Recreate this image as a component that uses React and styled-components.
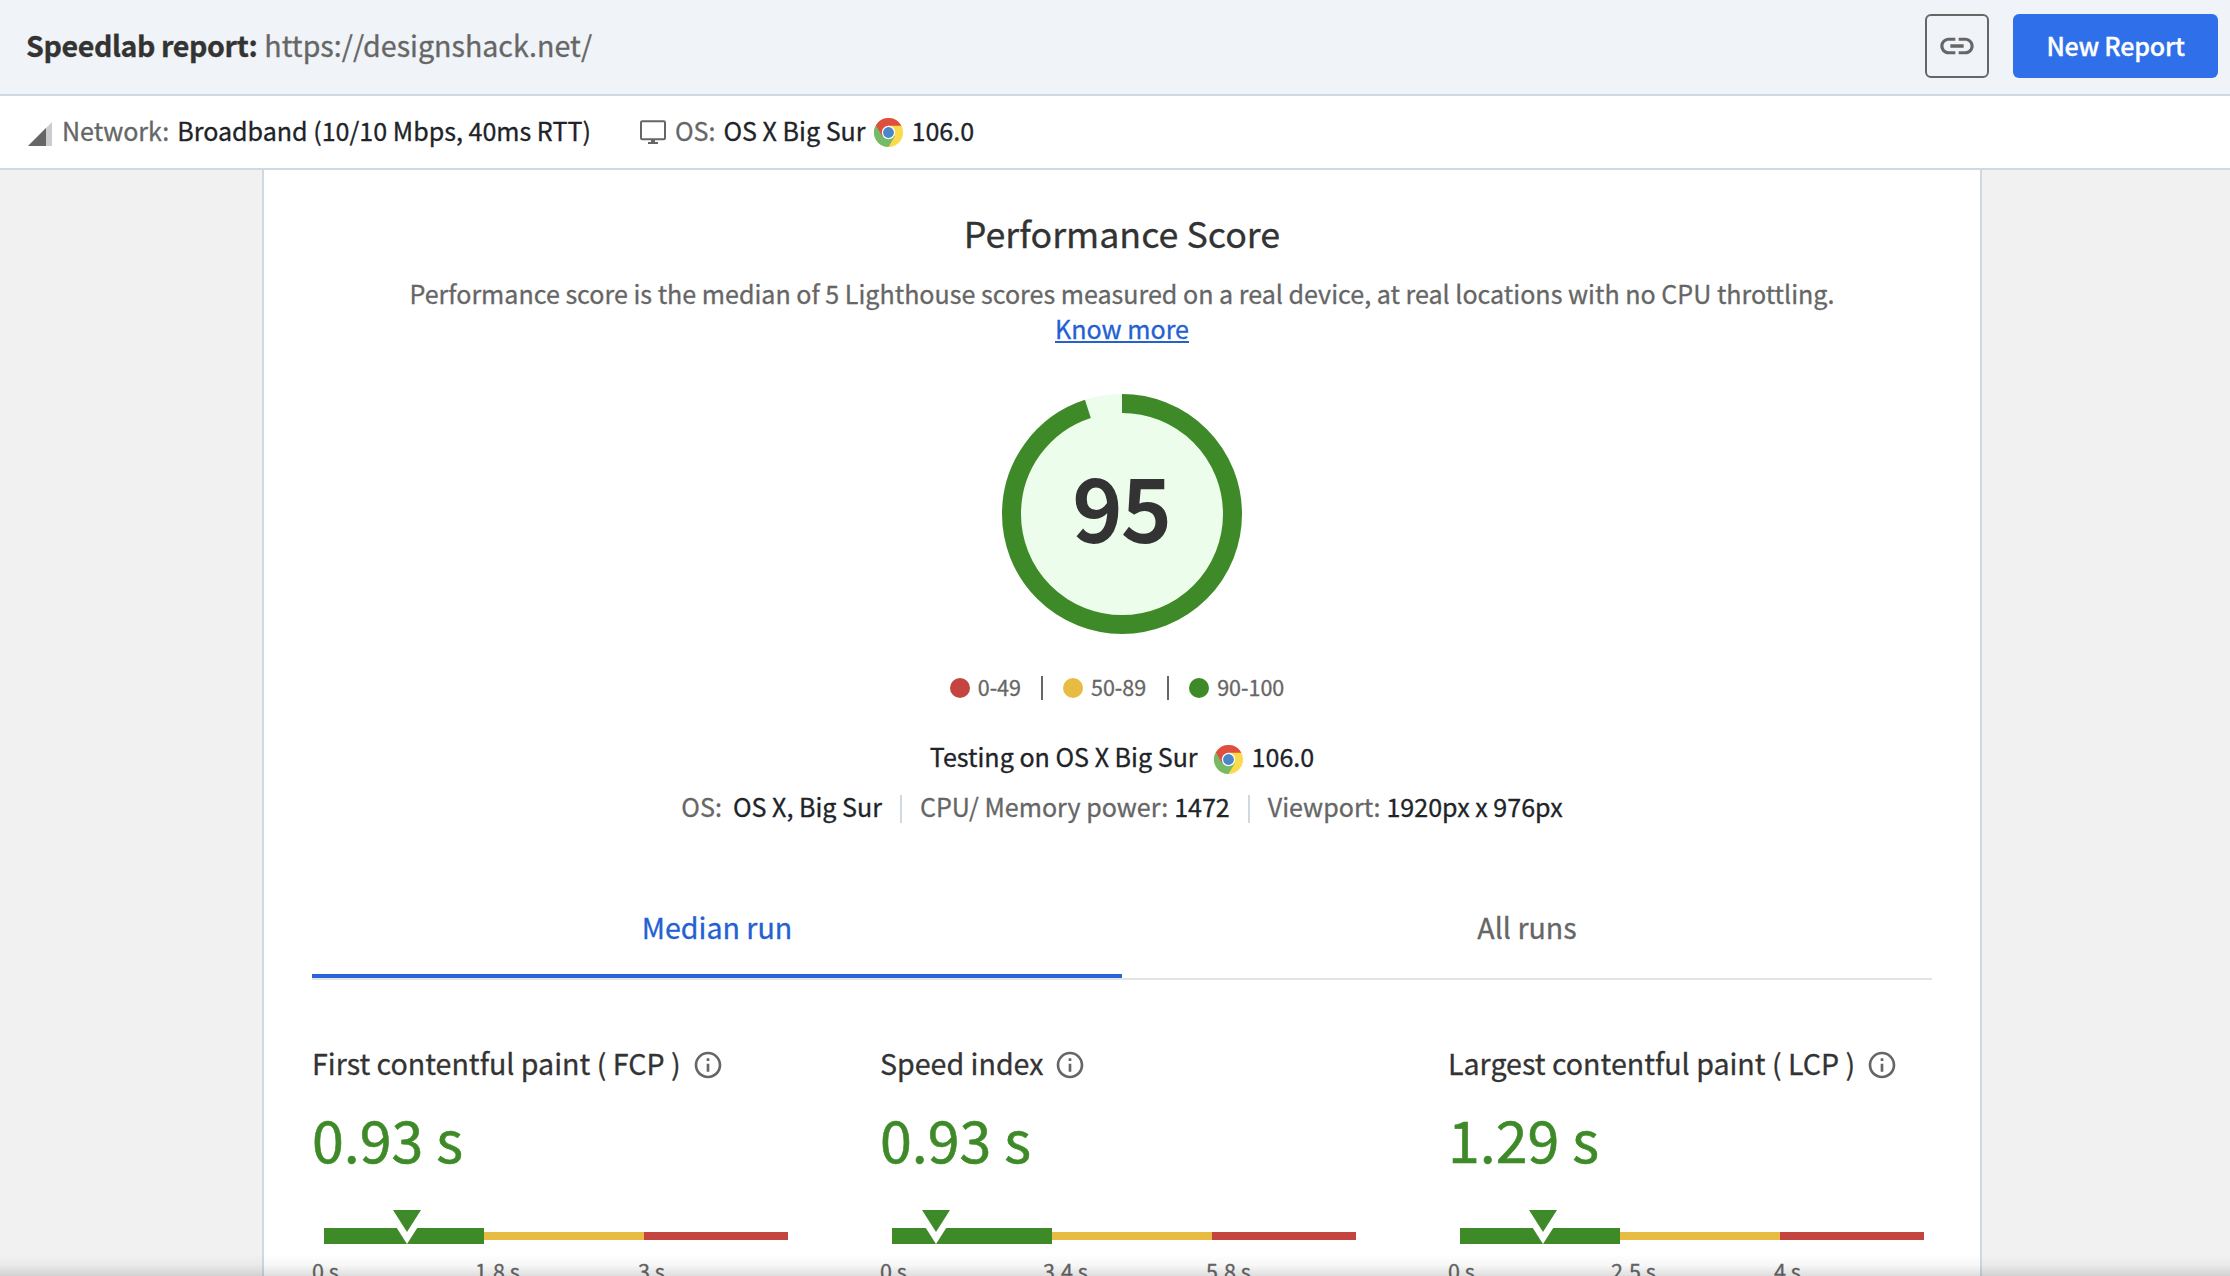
import React from "react";
import styled, { createGlobalStyle } from "styled-components";

const Global = createGlobalStyle`
  * { box-sizing: border-box; }
  body {
    margin: 0;
    background: #f1f1f1;
    font-family: "Noto Sans CJK SC", "Noto Sans", sans-serif;
    font-size: 25.07px;
    color: #202327;
    overflow: hidden;
    -webkit-text-stroke: 0.3px currentColor;
  }
`;

const Page = styled.div`
  position: relative;
  display: flex;
  flex-direction: column;
  height: 1276px;
  overflow: hidden;
`;

const T = styled.span`
  white-space: pre;
  line-height: ${(p) => p.$lh || 36}px;
  font-size: ${(p) => p.$size || 25.07}px;
  font-weight: ${(p) => p.$weight || 400};
  color: ${(p) => p.$color || "#202327"};
  letter-spacing: ${(p) => p.$track || 0}px;
  margin-bottom: ${(p) => p.$lift || 0}px;
`;

const Header = styled.header`
  display: flex;
  align-items: center;
  height: 96px;
  padding: 0 12px 2px 26px;
  background: #f0f3f7;
  border-bottom: 2px solid #d0d9e2;
`;

const HeaderTitle = styled.div`
  display: flex;
  flex: 1;
  gap: 7px;
`;

const IconButton = styled.button`
  display: flex;
  align-items: center;
  justify-content: center;
  width: 64px;
  height: 64px;
  padding: 0;
  margin: 0 24px 0 0;
  background: transparent;
  border: 2px solid #666;
  border-radius: 6px;
  color: #666;
`;

const PrimaryButton = styled.button`
  display: flex;
  align-items: center;
  justify-content: center;
  width: 205px;
  height: 64px;
  padding: 0;
  border: 0;
  border-radius: 6px;
  background: #2f6fea;
  font-family: inherit;
`;

const InfoBar = styled.div`
  display: flex;
  align-items: center;
  height: 74px;
  padding: 0 28px 0;
  background: #fff;
  border-bottom: 2px solid #d0d9e2;
`;

const InfoGroup = styled.div`
  display: flex;
  align-items: center;
  margin-right: ${(p) => p.$end || 0}px;

  > span { margin-bottom: 4px; }
`;

const SignalIcon = styled.svg`
  margin-top: 4px;
`;

const Gap = styled.i`
  flex: none;
  width: ${(p) => p.$w}px;
`;

const Panel = styled.main`
  display: flex;
  flex-direction: column;
  align-items: center;
  width: 1720px;
  height: 1106px;
  margin-left: 262px;
  padding: 37px 48px 0;
  background: #fff;
  border: solid #d0d9e2;
  border-width: 0 2px;
`;

const Title = styled.h1`
  margin: 0 0 18px;
  font-size: 35.8px;
  font-weight: 400;
  line-height: 50px;
  color: #333;
`;

const Lead = styled.p`
  display: flex;
  flex-direction: column;
  align-items: center;
  margin: 0;
  line-height: 36px;
  color: #666;
  white-space: nowrap;
`;

const Know = styled.a`
  line-height: 34px;
  color: #2361d2;
  text-decoration: underline;
  text-decoration-thickness: 2px;
  text-underline-offset: 2px;
`;

const Gauge = styled.div`
  display: grid;
  place-items: center;
  width: 240px;
  height: 240px;
  margin-top: 49px;

  > * { grid-area: 1 / 1; }
`;

const Score = styled.span`
  margin-bottom: 19px;
  font-size: 86px;
  font-weight: 500;
  line-height: 120px;
  color: #333;
  -webkit-text-stroke: 1.8px currentColor;
`;

const Legend = styled.div`
  display: flex;
  align-items: center;
  height: 24px;
  margin: 42px 0 0 -10px;
`;

const Dot = styled.i`
  width: 20px;
  height: 20px;
  margin-right: 8px;
  border-radius: 50%;
  background: ${(p) => p.$color};
`;

const Rule = styled.i`
  width: ${(p) => p.$w || 2}px;
  height: ${(p) => p.$h || 24}px;
  margin: 0 ${(p) => p.$gap}px;
  background: ${(p) => p.$color || "#666"};
`;

const Line = styled.div`
  display: flex;
  align-items: center;
  height: 36px;
  margin-top: ${(p) => p.$top}px;

  > span { margin-bottom: 6px; }
`;

const Tabs = styled.div`
  display: grid;
  grid-template-columns: 1fr 1fr;
  width: 1620px;
  height: 84px;
  margin-top: 69px;
  border-bottom: 2px solid #e4e4e4;
`;

const Tab = styled.div`
  display: flex;
  justify-content: center;
  height: 82px;
  padding-top: 9px;
  border-bottom: ${(p) => (p.$active ? "4px solid #2b63d9" : "0")};
`;

const Metrics = styled.div`
  display: grid;
  grid-template-columns: repeat(3, 484px);
  column-gap: 84px;
  width: 1620px;
  margin-top: 63px;
`;

const Metric = styled.section`
  display: flex;
  flex-direction: column;
`;

const MetricName = styled.div`
  display: flex;
  align-items: center;
  gap: 11px;
  height: 44px;
`;

const MetricValue = styled.div`
  height: 80px;
  margin-top: 11px;
  font-size: 57.3px;
  line-height: 81px;
  color: #3f8a28;
  -webkit-text-stroke: 0.6px currentColor;
`;

const Track = styled.div`
  position: relative;
  display: grid;
  grid-template-columns: 160px 160px 144px;
  align-items: center;
  height: 16px;
  margin: 50px 0 0 12px;
`;

const Seg = styled.i`
  height: ${(p) => p.$h}px;
  background: ${(p) => p.$color};
`;

const Marker = styled.svg`
  position: absolute;
  top: -18px;
  margin-left: -14px;
`;

const Ticks = styled.div`
  display: grid;
  grid-template-columns: 163px 163px auto;
  margin-top: 10px;
`;

const Fade = styled.div`
  position: absolute;
  inset: auto 0 0 0;
  height: 22px;
  background: linear-gradient(rgba(0, 0, 0, 0), rgba(0, 0, 0, 0.03) 50%, rgba(0, 0, 0, 0.13));
`;

const Chrome = ({ size = 29 }) => (
  <svg width={size} height={size} viewBox="0 0 48 48">
    <circle cx="24" cy="24" r="24" fill="#fbdb4b" />
    <path d="M24 24 L3.2 12 A24 24 0 0 0 24 48 L34.4 30Z" fill="#76b966" />
    <path d="M24 13 H45.3 L44.8 12 A24 24 0 0 0 3.2 12 L13.6 30Z" fill="#df4f40" />
    <circle cx="24" cy="24" r="11" fill="#fff" />
    <circle cx="24" cy="24" r="9" fill="#4a86c8" />
  </svg>
);

const Info = () => (
  <svg width="32" height="32" viewBox="0 0 24 24" fill="#666">
    <path d="M11 7h2v2h-2zm0 4h2v6h-2zm1-9C6.48 2 2 6.48 2 12s4.48 10 10 10 10-4.48 10-10S17.52 2 12 2zm0 18c-4.41 0-8-3.59-8-8s3.59-8 8-8 8 3.59 8 8-3.59 8-8 8z" />
  </svg>
);

const metrics = [
  { name: "First contentful paint ( FCP )", value: 0.93, mid: 1.8, ticks: ["0 s", "1.8 s", "3 s"] },
  { name: "Speed index", value: 0.93, mid: 3.4, ticks: ["0 s", "3.4 s", "5.8 s"] },
  { name: "Largest contentful paint ( LCP )", value: 1.29, mid: 2.5, ticks: ["0 s", "2.5 s", "4 s"] },
];

export default function App() {
  return (
    <Page>
      <Global />
      <Header>
        <HeaderTitle>
          <T $size={28.6} $lh={37} $lift={3} $weight={700} $track={-0.4} $color="#333">Speedlab report:</T>
          <T $size={28.6} $lh={37} $lift={3} $color="#666">https://designshack.net/</T>
        </HeaderTitle>
        <IconButton aria-label="Copy link">
          <svg width="40" height="40" viewBox="0 0 24 24" fill="currentColor">
            <path d="M3.9 12c0-1.71 1.39-3.1 3.1-3.1h4V7H7c-2.76 0-5 2.24-5 5s2.24 5 5 5h4v-1.9H7c-1.71 0-3.1-1.39-3.1-3.1zM8 13h8v-2H8v2zm9-6h-4v1.9h4c1.71 0 3.1 1.39 3.1 3.1s-1.39 3.1-3.1 3.1h-4V17h4c2.76 0 5-2.24 5-5s-2.24-5-5-5z" />
          </svg>
        </IconButton>
        <PrimaryButton><T $weight={500} $track={-0.25} $lift={2} $color="#fff">New Report</T></PrimaryButton>
      </Header>
      <InfoBar>
        <InfoGroup $end={49}>
          <SignalIcon width="24" height="24" viewBox="0 0 24 24">
            <path d="M0 24 L24 0 V24Z" fill="#ccc" />
            <path d="M0 24 L18 6 V24Z" fill="#666" />
          </SignalIcon>
          <Gap $w={10} />
          <T $color="#666">Network:</T>
          <Gap $w={8} />
          <T>Broadband (10/10 Mbps, 40ms RTT)</T>
        </InfoGroup>
        <InfoGroup>
          <svg width="26" height="24" viewBox="0 0 26 24">
            <rect x="1" y="1.2" width="24" height="18" rx="1.2" fill="none" stroke="#666" strokeWidth="2" />
            <path d="M11 19h4v3h3v2H8v-2h3z" fill="#666" />
          </svg>
          <Gap $w={9} />
          <T $color="#666">OS:</T>
          <Gap $w={8} />
          <T>OS X Big Sur</T>
          <Gap $w={8} />
          <Chrome />
          <Gap $w={9} />
          <T>106.0</T>
        </InfoGroup>
      </InfoBar>
      <Panel>
        <Title>Performance Score</Title>
        <Lead>
          <span>Performance score is the median of 5 Lighthouse scores measured on a real device, at real locations with no CPU throttling.</span>
          <Know>Know more</Know>
        </Lead>
        <Gauge>
          <svg width="240" height="240" viewBox="0 0 240 240">
            <circle cx="120" cy="120" r="120" fill="#edfdec" />
            <circle cx="120" cy="120" r="110.5" fill="none" stroke="#3f8a28" strokeWidth="19" pathLength="100" strokeDasharray="95 5" transform="rotate(-90 120 120)" />
          </svg>
          <Score>95</Score>
        </Gauge>
        <Legend>
          <Dot $color="#c6443f" />
          <T $size={21.5} $lift={3} $color="#666">0-49</T>
          <Rule $gap={20} />
          <Dot $color="#e7bc42" />
          <T $size={21.5} $lift={3} $color="#666">50-89</T>
          <Rule $gap={20.5} />
          <Dot $color="#3f8a28" />
          <T $size={21.5} $lift={3} $color="#666">90-100</T>
        </Legend>
        <Line $top={41}>
          <T>Testing on OS X Big Sur</T>
          <Gap $w={16} />
          <Chrome />
          <Gap $w={9} />
          <T>106.0</T>
        </Line>
        <Line $top={14}>
          <T $color="#666">OS:</T>
          <Gap $w={11} />
          <T>OS X, Big Sur</T>
          <Rule $h={28} $gap={18} $color="#d0d9e2" />
          <T $color="#666">CPU/ Memory power:</T>
          <Gap $w={6} />
          <T>1472</T>
          <Rule $h={28} $gap={18} $color="#d0d9e2" />
          <T $color="#666">Viewport:</T>
          <Gap $w={6} />
          <T>1920px x 976px</T>
        </Line>
        <Tabs>
          <Tab $active><T $size={28.6} $lh={43} $color="#2361d2">Median run</T></Tab>
          <Tab><T $size={28.6} $lh={43} $color="#666">All runs</T></Tab>
        </Tabs>
        <Metrics>
          {metrics.map((m) => (
            <Metric key={m.name}>
              <MetricName>
                <T $size={28.6} $lh={43} $lift={5} $color="#333">{m.name}</T>
                <Info />
              </MetricName>
              <MetricValue>{m.value} s</MetricValue>
              <Track>
                <Seg $h={16} $color="#3f8a28" />
                <Seg $h={8} $color="#e7bc42" />
                <Seg $h={8} $color="#c6443f" />
                <Marker width="28" height="34" viewBox="0 0 28 34" style={{ left: (m.value / m.mid) * 160 }}>
                  <path d="M0 12H28L14 34Z" fill="#fff" />
                  <path d="M0 0H28L14 22Z" fill="#3f8a28" />
                </Marker>
              </Track>
              <Ticks>
                {m.ticks.map((t) => <T key={t} $size={21.5} $lh={33} $color="#666">{t}</T>)}
              </Ticks>
            </Metric>
          ))}
        </Metrics>
      </Panel>
      <Fade />
    </Page>
  );
}
